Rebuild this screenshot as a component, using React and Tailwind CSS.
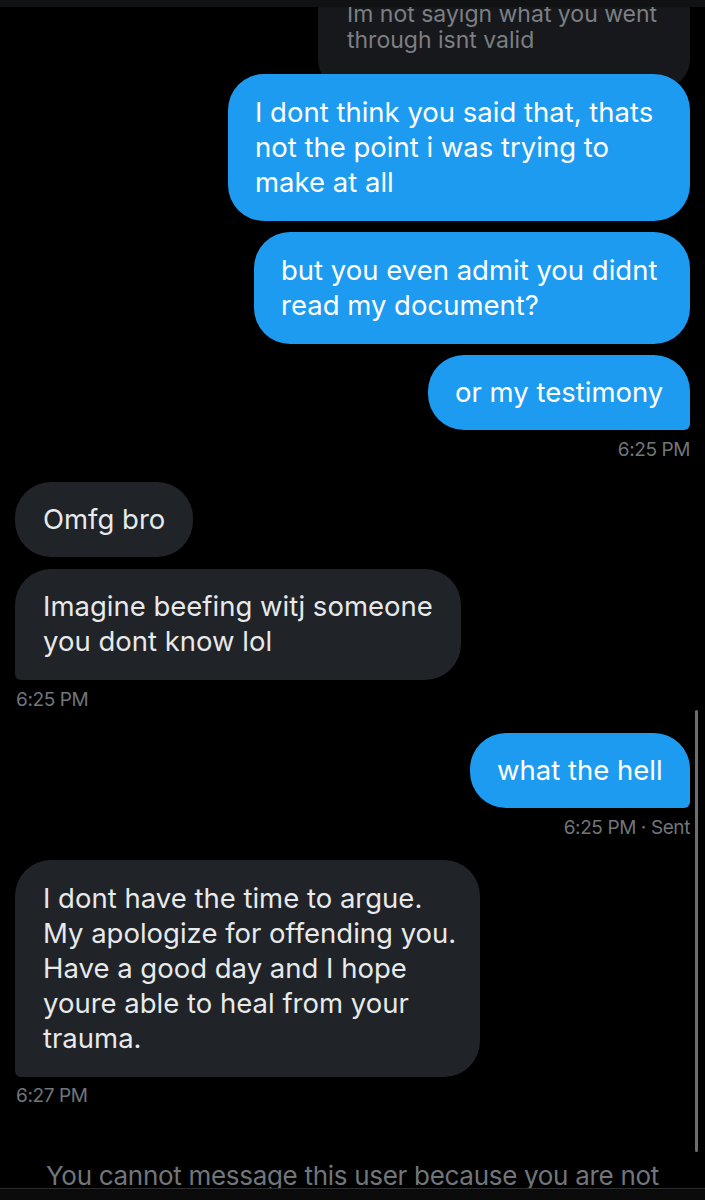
const Sent = ({ children, className = '', last }) => (
    <div
        className={`self-end bg-[#1d9bf0] text-white text-[27.5px] leading-[35px] px-[27px] whitespace-nowrap rounded-[36px] ${last ? 'rounded-br-[6px]' : ''} ${className}`}
    >
        {children}
    </div>
);

const Received = ({ children, className = '', last }) => (
    <div
        className={`self-start bg-[#202327] text-[#e7e9ea] text-[27.5px] leading-[35px] px-[28px] whitespace-nowrap rounded-[36px] ${last ? 'rounded-bl-[6px]' : ''} ${className}`}
    >
        {children}
    </div>
);

const Stamp = ({ children, className = '' }) => (
    <div className={`text-[19px] leading-[20px] text-[#71767b] tracking-[-0.4px] ${className}`}>{children}</div>
);

export default function App() {
    return (
        <div className="w-[705px] h-[1200px] bg-black overflow-hidden relative flex flex-col font-['Inter','Noto_Sans',sans-serif]">
            {/* header edge */}
            <div className="h-[7px] bg-[#111214] relative z-10 shrink-0"></div>

            <div className="flex-1 flex flex-col px-[15px]">
                {/* reply with quoted message */}
                <div className="flex flex-col items-end">
                    <div className="w-[372px] -mt-[25px] bg-[#16181c] text-[#7c7f84] text-[23px] leading-[26px] pl-[29px] pt-[19px] pb-[35px] rounded-[28px] whitespace-nowrap">
                        Im not sayign what you went<br />through isnt valid
                    </div>
                    <Sent className="relative -mt-[14px] w-[462px] py-[21px]">
                        I dont think you said that, thats<br />not the point i was trying to<br />make at all
                    </Sent>
                </div>
                <Sent className="mt-[11px] w-[436px] py-[21px]">
                    but you even admit you didnt<br />read my document?
                </Sent>
                <Sent className="mt-[11px] w-[262px] py-[20px]" last>
                    or my testimony
                </Sent>
                <Stamp className="self-end mt-[10px]">6:25 PM</Stamp>

                <Received className="mt-[22px] py-[20px]">Omfg bro</Received>
                <Received className="mt-[12px] w-[446px] pt-[20px] pb-[21px]" last>
                    Imagine beefing witj someone<br />you dont know lol
                </Received>
                <Stamp className="self-start mt-[10px] ml-[1px]">6:25 PM</Stamp>

                <Sent className="mt-[23px] w-[220px] py-[20px]" last>
                    what the hell
                </Sent>
                <Stamp className="self-end mt-[10px]">6:25 PM · Sent</Stamp>

                <Received className="mt-[22px] w-[465px] py-[21px]" last>
                    I dont have the time to argue.<br />My apologize for offending you.<br />Have a good day and I hope<br />youre able to heal from your<br />trauma.
                </Received>
                <Stamp className="self-start mt-[9px] ml-[1px]">6:27 PM</Stamp>

                <div className="mt-auto text-center text-[26px] leading-[30px] text-[#71767b] whitespace-nowrap tracking-[-0.3px] -mb-[3px]">
                    You cannot message this user because you are not
                </div>
            </div>

            {/* bottom bar */}
            <div className="h-[12px] bg-[#0b0b0c] border-t border-[#2a2c30] relative z-10 shrink-0"></div>

            {/* scrollbar */}
            <div className="absolute right-[7px] top-[710px] w-[3px] h-[442px] rounded-full bg-[#6e6e6e]"></div>
        </div>
    );
}
